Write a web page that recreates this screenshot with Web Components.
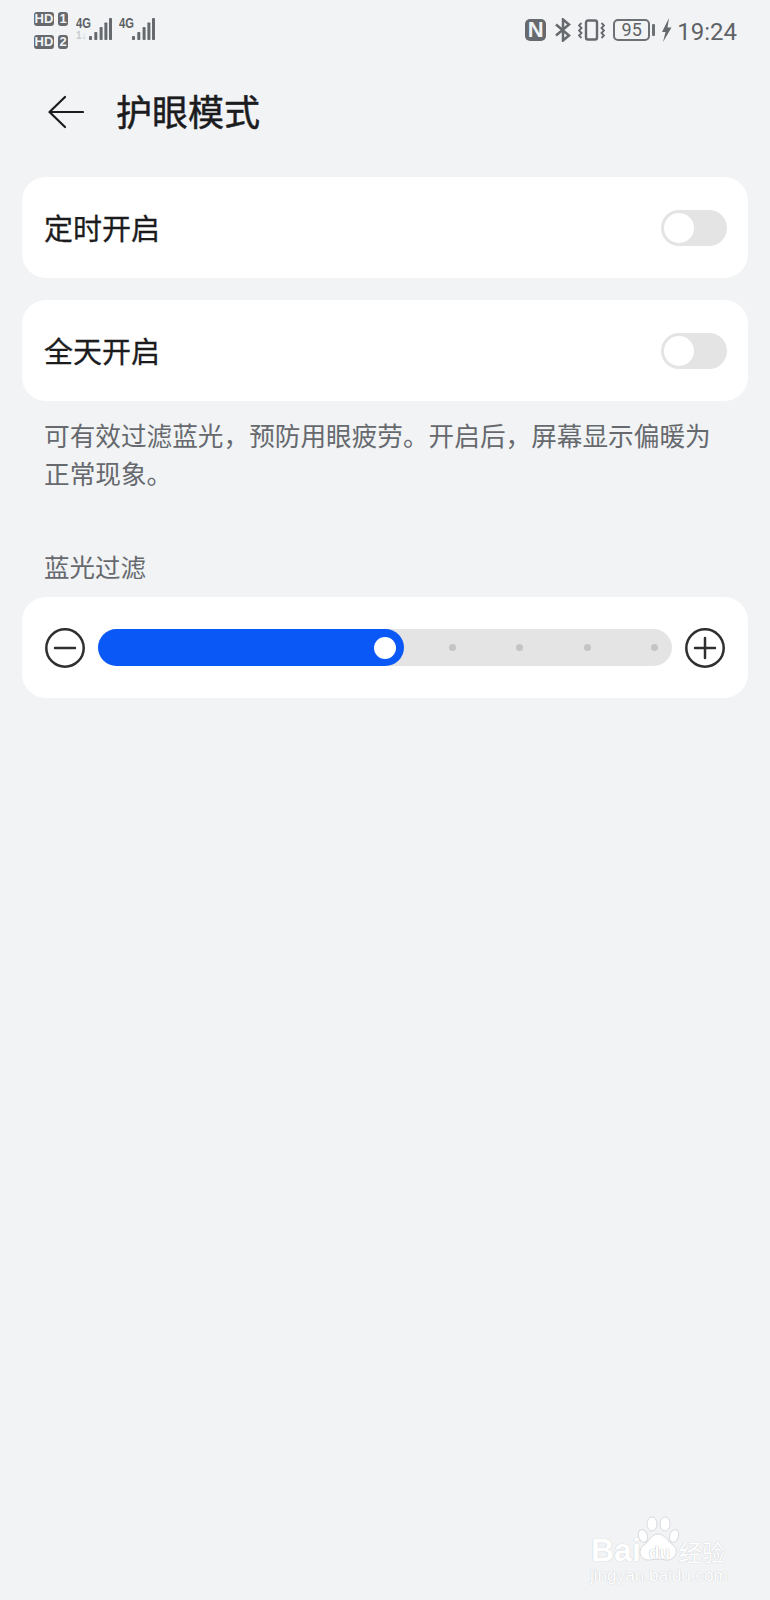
<!DOCTYPE html>
<html lang="zh-CN">
<head>
<meta charset="utf-8">
<title>护眼模式</title>
<style>
    html, body {
        margin: 0;
        padding: 0;
        background: #f1f3f5;
    }

    body {
        position: relative;
        width: 770px;
        height: 1600px;
        overflow: hidden;
        font-family: "Noto Sans CJK SC", "Noto Sans", sans-serif;
    }
</style>
</head>
<body>
<status-bar></status-bar>
<title-bar>护眼模式</title-bar>
<page-body>
    <setting-card>定时开启</setting-card>
    <setting-card>全天开启</setting-card>
    <hint-text>可有效过滤蓝光，预防用眼疲劳。开启后，屏幕显示偏暖为正常现象。</hint-text>
    <section-label>蓝光过滤</section-label>
    <filter-slider></filter-slider>
</page-body>
<baidu-mark></baidu-mark>

<script>
class StatusBar extends HTMLElement {
    constructor() {
        super();
        this.shadow = this.attachShadow({ mode: 'open' });
    }

    connectedCallback() {
        this.render();
    }

    bars() {
        return `
            <svg width="24" height="22" viewBox="0 0 24 22" fill="#66696d">
                <rect x="1" y="18" width="3" height="4" rx=".8"/>
                <rect x="6.300" y="14" width="3" height="8" rx=".8"/>
                <rect x="11.600" y="9" width="3" height="13" rx=".8"/>
                <rect x="16.400" y="4.500" width="3" height="17.500" rx=".8"/>
                <rect x="21" y="0" width="3" height="22" rx=".8"/>
            </svg>`;
    }

    render() {
        this.shadow.innerHTML = `
            <style>
                :host {
                    display: flex;
                    height: 60px;
                    padding: 0 33px 0 34px;
                    align-items: center;
                    justify-content: space-between;
                    color: #5f6266;
                    font-family: Roboto, "Liberation Sans", sans-serif;
                }

                .side {
                    display: flex;
                    align-items: center;
                }

                .sims {
                    display: grid;
                    gap: 9px;
                    margin-right: 8px;
                }

                .sim {
                    display: flex;
                    gap: 4px;
                }

                .pill {
                    display: flex;
                    width: 20px;
                    height: 14px;
                    border-radius: 3px;
                    background: #66696d;
                    color: #f1f3f5;
                    font: 700 13px/14px "Liberation Sans Narrow", "Liberation Sans", sans-serif;
                    justify-content: center;
                }

                .pill.num {
                    width: 10px;
                }

                .net {
                    display: flex;
                    position: relative;
                    height: 38px;
                    align-items: flex-start;
                    margin-right: 7px;
                }

                .net b {
                    width: 12px;
                    margin-top: 5px;
                    font: 700 14px/14px "Liberation Sans Narrow", "Liberation Sans", sans-serif;
                    transform: scaleX(.8);
                    transform-origin: left;
                    white-space: nowrap;
                }

                .net i {
                    position: absolute;
                    left: 0;
                    top: 20px;
                    color: #c9cbce;
                    font: 700 10px/10px "Liberation Sans Narrow", "Liberation Sans", sans-serif;
                }

                .net svg {
                    margin-top: 7px;
                }

                .nfc {
                    display: flex;
                    width: 21px;
                    height: 22px;
                    margin-right: 8px;
                    border-radius: 5px;
                    background: #66696d;
                    color: #f1f3f5;
                    font: 700 22px/22px "Liberation Sans Narrow", "Liberation Sans", sans-serif;
                    justify-content: center;
                }

                .battery {
                    display: flex;
                    box-sizing: border-box;
                    width: 37px;
                    height: 22px;
                    border: 2px solid #6d7074;
                    border-radius: 5px;
                    font-size: 18px;
                    line-height: 18px;
                    justify-content: center;
                }

                .nub {
                    width: 3px;
                    height: 12px;
                    margin: 0 6px 0 2px;
                    border-radius: 1px;
                    background: #6d7074;
                }

                .time {
                    margin: 3px 0 0 5px;
                    font-size: 24px;
                    line-height: 28px;
                }
            </style>
            <div class="side">
                <div class="sims">
                    <div class="sim"><span class="pill">HD</span><span class="pill num">1</span></div>
                    <div class="sim"><span class="pill">HD</span><span class="pill num">2</span></div>
                </div>
                <div class="net"><b>4G</b><i>1↓</i>${this.bars()}</div>
                <div class="net"><b>4G</b>${this.bars()}</div>
            </div>
            <div class="side">
                <span class="nfc">N</span>
                <svg width="18" height="24" viewBox="0 0 18 24" fill="none" stroke="#66696d" stroke-width="2.500" style="margin-right:6px">
                    <path d="M2 6.500 15 17.500 9 22.500V1.500L15 6.500 2 17.500"/>
                </svg>
                <svg width="27" height="24" viewBox="0 0 27 24" fill="none" stroke="#66696d" stroke-width="2.400" style="margin-right:8px">
                    <rect x="8" y="2.500" width="11" height="19" rx="2"/>
                    <path d="M3.500 5 1 7.500 3.500 10 1 12.500 3.500 15 1 17.500 3.500 20M23.500 5 26 7.500 23.500 10 26 12.500 23.500 15 26 17.500 23.500 20" stroke-width="1.800"/>
                </svg>
                <span class="battery">95</span>
                <span class="nub"></span>
                <svg width="11" height="24" viewBox="0 0 11 24" fill="#66696d">
                    <path d="M8 0 1 14H4.500L2 24 10.500 9.500H6.500Z"/>
                </svg>
                <span class="time">19:24</span>
            </div>
        `;
    }
}

class TitleBar extends HTMLElement {
    constructor() {
        super();
        this.shadow = this.attachShadow({ mode: 'open' });
    }

    connectedCallback() {
        this.shadow.innerHTML = `
            <style>
                :host {
                    display: flex;
                    height: 104px;
                    padding-left: 48px;
                    align-items: center;
                    gap: 32px;
                    color: #1c1c1e;
                    font-size: 36px;
                    font-weight: 400;
                    -webkit-text-stroke: .5px #1c1c1e;
                }

                svg {
                    display: block;
                }

                span {
                    margin-bottom: 4px;
                }
            </style>
            <svg width="36" height="34" viewBox="0 0 36 34" fill="none" stroke="#1c1c1e" stroke-width="2.200" stroke-linecap="round" stroke-linejoin="round">
                <path d="M35 17H2M17 2 1.500 17 17 32"/>
            </svg>
            <span><slot></slot></span>
        `;
    }
}

class PageBody extends HTMLElement {
    constructor() {
        super();
        this.shadow = this.attachShadow({ mode: 'open' });
    }

    connectedCallback() {
        this.shadow.innerHTML = `
            <style>
                :host {
                    display: flex;
                    flex-direction: column;
                    padding: 13px 22px 0;
                }
            </style>
            <slot></slot>
        `;
    }
}

class SettingCard extends HTMLElement {
    constructor() {
        super();
        this.shadow = this.attachShadow({ mode: 'open' });
    }

    connectedCallback() {
        this.shadow.innerHTML = `
            <style>
                :host {
                    display: flex;
                    height: 101px;
                    margin-bottom: 22px;
                    padding: 0 21px 0 22px;
                    border-radius: 24px;
                    background: #fff;
                    align-items: center;
                    justify-content: space-between;
                    color: #1c1c1e;
                    font-size: 29px;
                    font-weight: 400;
                }

                :host(:nth-of-type(2)) {
                    margin-bottom: 0;
                }

                span {
                    margin-bottom: 2px;
                    -webkit-text-stroke: .3px #1c1c1e;
                }
            </style>
            <span><slot></slot></span>
            <toggle-switch></toggle-switch>
        `;
    }
}

class ToggleSwitch extends HTMLElement {
    constructor() {
        super();
        this.shadow = this.attachShadow({ mode: 'open' });
    }

    connectedCallback() {
        this.shadow.innerHTML = `
            <style>
                :host {
                    display: flex;
                    box-sizing: border-box;
                    width: 66px;
                    height: 36px;
                    padding: 3px;
                    border-radius: 18px;
                    background: #e4e4e4;
                }

                span {
                    width: 30px;
                    height: 30px;
                    border-radius: 50%;
                    background: #fff;
                }
            </style>
            <span></span>
        `;
    }
}

class HintText extends HTMLElement {
    constructor() {
        super();
        this.shadow = this.attachShadow({ mode: 'open' });
    }

    connectedCallback() {
        this.shadow.innerHTML = `
            <style>
                :host {
                    display: block;
                    padding: 15px 22px 0;
                    color: #66696d;
                    font-size: 25.650px;
                    line-height: 38px;
                }
            </style>
            <slot></slot>
        `;
    }
}

class SectionLabel extends HTMLElement {
    constructor() {
        super();
        this.shadow = this.attachShadow({ mode: 'open' });
    }

    connectedCallback() {
        this.shadow.innerHTML = `
            <style>
                :host {
                    display: block;
                    padding: 54px 22px 11px;
                    color: #66696d;
                    font-size: 25.500px;
                    line-height: 40px;
                }
            </style>
            <slot></slot>
        `;
    }
}

class FilterSlider extends HTMLElement {
    constructor() {
        super();
        this.shadow = this.attachShadow({ mode: 'open' });
    }

    connectedCallback() {
        this.shadow.innerHTML = `
            <style>
                :host {
                    display: flex;
                    height: 101px;
                    padding: 0 23px;
                    border-radius: 24px;
                    background: #fff;
                    align-items: center;
                    gap: 13px;
                }

                svg {
                    display: block;
                    flex: none;
                }

                .track {
                    display: flex;
                    flex: 1;
                    height: 37px;
                    border-radius: 19px;
                    background: #e4e4e4;
                    align-items: center;
                }

                .fill {
                    display: flex;
                    box-sizing: border-box;
                    width: 306px;
                    height: 37px;
                    padding-right: 8px;
                    border-radius: 19px;
                    background: #0a59f7;
                    align-items: center;
                    justify-content: flex-end;
                }

                .knob {
                    width: 22px;
                    height: 22px;
                    border-radius: 50%;
                    background: #fff;
                }

                .dots {
                    display: flex;
                    padding-left: 44.500px;
                    gap: 60.500px;
                }

                .dots span {
                    width: 7px;
                    height: 7px;
                    border-radius: 50%;
                    background: #c4c4c4;
                }
            </style>
            <svg width="40" height="40" viewBox="0 0 40 40" fill="none" stroke="#2f2f31" stroke-width="2.500" stroke-linecap="round">
                <circle cx="20" cy="20" r="18.700"/>
                <path d="M10 20H30"/>
            </svg>
            <div class="track">
                <div class="fill"><span class="knob"></span></div>
                <div class="dots"><span></span><span></span><span></span><span></span></div>
            </div>
            <svg width="40" height="40" viewBox="0 0 40 40" fill="none" stroke="#2f2f31" stroke-width="2.500" stroke-linecap="round">
                <circle cx="20" cy="20" r="18.700"/>
                <path d="M10 20H30M20 10V30"/>
            </svg>
        `;
    }
}

class BaiduMark extends HTMLElement {
    constructor() {
        super();
        this.shadow = this.attachShadow({ mode: 'open' });
    }

    connectedCallback() {
        this.shadow.innerHTML = `
            <style>
                :host {
                    position: absolute;
                    left: 590px;
                    top: 1516px;
                    display: block;
                    width: 145px;
                    height: 70px;
                    color: #fff;
                    font-family: "Liberation Sans", sans-serif;
                    text-shadow: 0 0 1px #cfd1d4, 0 0 1px #cfd1d4;
                }

                span {
                    position: absolute;
                    white-space: nowrap;
                }

                svg {
                    position: absolute;
                    left: 42px;
                    top: 0;
                }

                .bai {
                    left: 1px;
                    top: 16px;
                    font-size: 32px;
                    font-weight: 700;
                    line-height: 36px;
                }

                .du {
                    left: 59px;
                    top: 29px;
                    font-size: 17px;
                    font-weight: 700;
                    line-height: 16px;
                    text-shadow: 0 0 1px #b9bbbe, 0 0 1px #b9bbbe;
                }

                .jy {
                    left: 89px;
                    top: 21px;
                    font-family: "Noto Sans CJK SC", sans-serif;
                    font-size: 23px;
                    line-height: 28px;
                }

                .url {
                    left: 0;
                    top: 50px;
                    font-size: 17.100px;
                    line-height: 20px;
                }
            </style>
            <svg width="50" height="50" viewBox="0 0 50 50" fill="#fff" stroke="#d8dadd" stroke-width="1">
                <ellipse cx="11" cy="20" rx="4.500" ry="6.500" transform="rotate(-18 11 20)"/>
                <ellipse cx="20" cy="8" rx="5" ry="7"/>
                <ellipse cx="33" cy="8" rx="5" ry="7"/>
                <ellipse cx="42" cy="20" rx="4.500" ry="6.500" transform="rotate(18 42 20)"/>
                <path d="M26 18C33 18 36 26 41 29 48 34 43 45 34 44 29 43 23 43 18 44 9 45 4 35 12 29 17 26 19 18 26 18Z"/>
            </svg>
            <span class="bai">Bai</span>
            <span class="du">du</span>
            <span class="jy">经验</span>
            <span class="url">jingyan.baidu.com</span>
        `;
    }
}

customElements.define('status-bar', StatusBar);
customElements.define('title-bar', TitleBar);
customElements.define('page-body', PageBody);
customElements.define('setting-card', SettingCard);
customElements.define('toggle-switch', ToggleSwitch);
customElements.define('hint-text', HintText);
customElements.define('section-label', SectionLabel);
customElements.define('filter-slider', FilterSlider);
customElements.define('baidu-mark', BaiduMark);
</script>
</body>
</html>
